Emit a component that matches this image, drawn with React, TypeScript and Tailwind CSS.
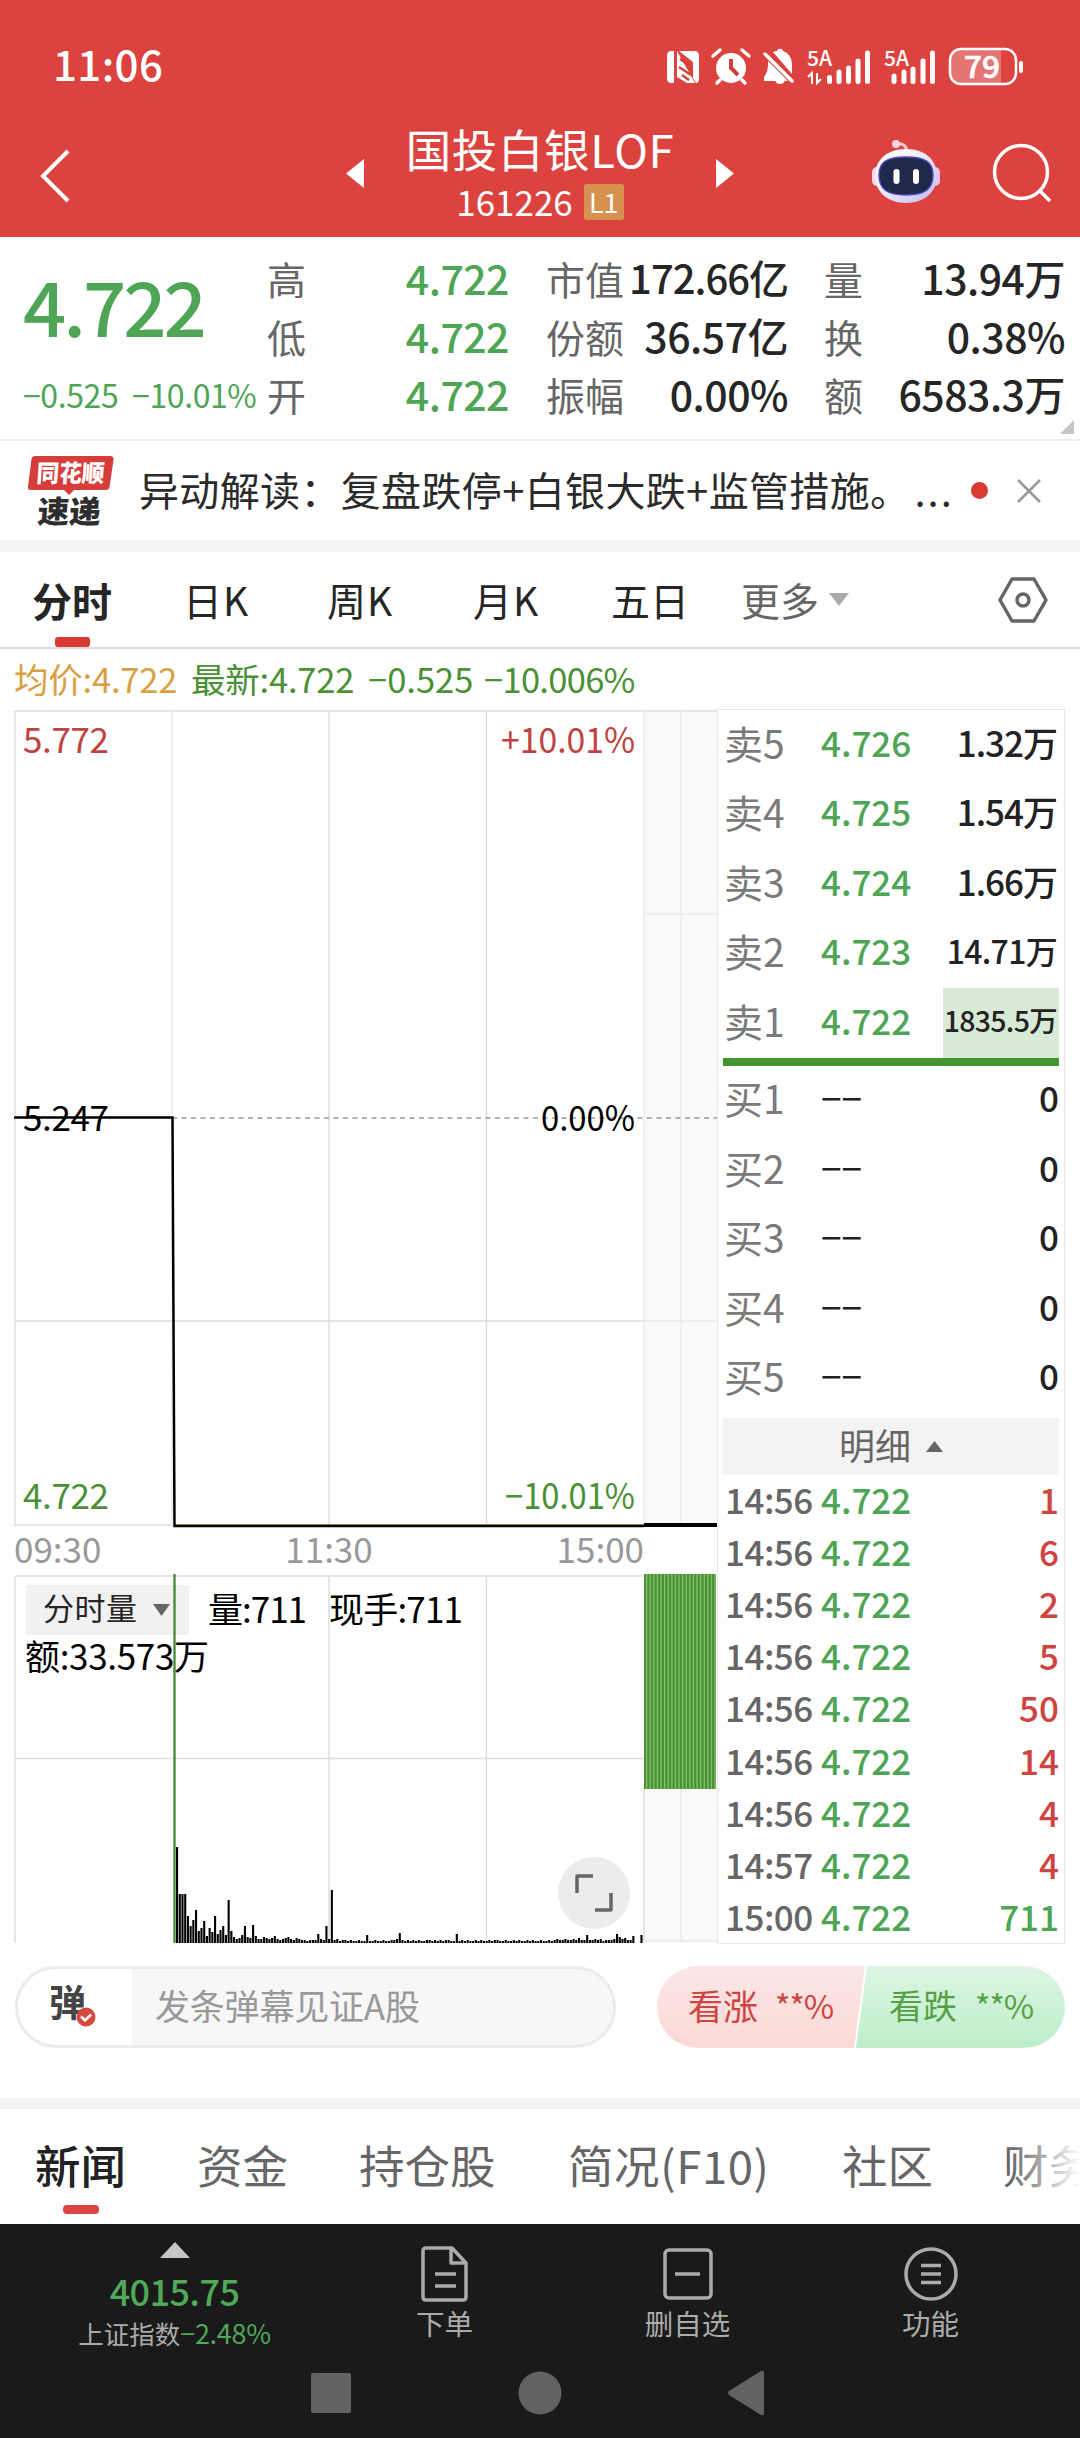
import type { ReactNode } from 'react';
import clsx from 'clsx';

const stats = [
  [
    { label: '高', value: '4.722' },
    { label: '低', value: '4.722' },
    { label: '开', value: '4.722' },
  ],
  [
    { label: '市值', value: '172.66亿' },
    { label: '份额', value: '36.57亿' },
    { label: '振幅', value: '0.00%' },
  ],
  [
    { label: '量', value: '13.94万' },
    { label: '换', value: '0.38%' },
    { label: '额', value: '6583.3万' },
  ],
];

const asks = [
  { label: '卖5', price: '4.726', volume: '1.32万' },
  { label: '卖4', price: '4.725', volume: '1.54万' },
  { label: '卖3', price: '4.724', volume: '1.66万' },
  { label: '卖2', price: '4.723', volume: '14.71万' },
  { label: '卖1', price: '4.722', volume: '1835.5万' },
];

const bids = ['买1', '买2', '买3', '买4', '买5'];

const trades = [
  { time: '14:56', volume: '1' },
  { time: '14:56', volume: '6' },
  { time: '14:56', volume: '2' },
  { time: '14:56', volume: '5' },
  { time: '14:56', volume: '50' },
  { time: '14:56', volume: '14' },
  { time: '14:56', volume: '4' },
  { time: '14:57', volume: '4' },
  { time: '15:00', volume: '711', down: true },
];

// Per-minute volume after the resumption, in chart pixels
const volumes = [
  96, 49, 49, 49, 27, 17, 23, 33, 12, 15, 22, 7, 15, 11, 27, 9, 13, 17, 8, 43, 12, 6, 4, 5, 8, 17, 6, 5, 18, 7,
  4, 4, 6, 5, 4, 5, 7, 4, 3, 4, 5, 6, 4, 3, 5, 4, 3, 3, 2, 3, 3, 3, 9, 4, 3, 17, 4, 53, 3, 4,
  2, 3, 3, 2, 3, 2, 2, 3, 2, 2, 8, 2, 2, 3, 2, 2, 3, 2, 2, 3, 3, 4, 10, 3, 2, 3, 2, 3, 2, 3,
  2, 2, 3, 3, 2, 3, 2, 3, 2, 3, 3, 2, 2, 9, 2, 3, 2, 3, 2, 2, 3, 2, 3, 2, 2, 3, 2, 3, 3, 2,
  2, 3, 2, 2, 3, 2, 3, 2, 2, 3, 2, 3, 2, 2, 3, 2, 2, 3, 2, 3, 4, 3, 3, 4, 3, 3, 4, 3, 5, 3,
  3, 8, 3, 3, 4, 3, 4, 2, 3, 3, 3, 4, 9, 6, 4, 5, 3, 3, 7, 0, 0, 8,
];

function StatusIcons() {
  return (
    <svg width="370" height="50" viewBox="660 40 370 50" fill="#fff">
      <path d="M671 51h3v32h-3q-4 0-4-5V56q0-5 4-5z" />
      <path d="M677 51l18 32h-8l-10-6zM679 51h15q5 0 5 5v22q0 5-3 5l-3-5V62z" />
      <path d="M680 59l9 6M679 67l12 8M682 75l7 5" stroke="#d43f3b" strokeWidth="2.200" />
      <circle cx="731" cy="68" r="15" />
      <path d="M713 56l7-6M749 56l-7-6M720 80l-3 3M742 80l3 3" stroke="#fff" strokeWidth="3.500" strokeLinecap="round" />
      <path d="M731 59v9l7 7" fill="none" stroke="#d43f3b" strokeWidth="4" />
      <path d="M764 77q4-5 4-13v-3l20 20h-24zM773 52q2-1 4-1 1-3 3-2 2-1 3 2 9 3 9 14v9zM775 80h10q-1 4-5 4t-5-4z" />
      <path d="M765 54l27 27" stroke="#fff" strokeWidth="3.500" strokeLinecap="round" />
      <g fontSize="21" fontWeight="500" fontFamily="'Noto Sans CJK SC', sans-serif">
        <text x="807" y="66" textLength="25" lengthAdjust="spacingAndGlyphs">5A</text>
        <text x="884" y="66" textLength="25" lengthAdjust="spacingAndGlyphs">5A</text>
      </g>
      <path d="M808 77l4-4v11M817 73v10l4-4" fill="none" stroke="#fff" strokeWidth="2" />
      <g stroke="#fff" strokeWidth="5" strokeLinecap="round">
        <path d="M829.500 77.500v4M839 72v9.500M848.500 68v13.500M858 61v20.500M867.500 53v28.500" />
        <path d="M894 76v5.500M904 72v9.500M913 69v12.500M923 61v20.500M932.500 53v28.500" />
      </g>
      <path d="M962 50h39v33h-39q-11 0-11-11V61q0-11 11-11z" fillOpacity=".27" />
      <rect x="950" y="49" width="66" height="35" rx="11" fill="none" stroke="#fff" strokeWidth="2.500" />
      <rect x="1019" y="61" width="4" height="12" rx="2" />
      <text x="964" y="77.500" fontSize="30" fontWeight="500" textLength="36" lengthAdjust="spacingAndGlyphs" stroke="#fff" strokeWidth=".6" fontFamily="'Noto Sans CJK SC', sans-serif">79</text>
    </svg>
  );
}

function RobotIcon() {
  return (
    <svg width="70" height="66" viewBox="0 0 70 66">
      <defs>
        <linearGradient id="shell" x1="0" y1="0" x2="1" y2="1">
          <stop offset="0" stopColor="#fff" />
          <stop offset=".5" stopColor="#e8e9fd" />
          <stop offset="1" stopColor="#c3b4f2" />
        </linearGradient>
      </defs>
      <path d="M25 5q10-2 11 8" fill="none" stroke="#fbc9d3" strokeWidth="3" />
      <circle cx="25" cy="5" r="4" fill="#fbd5dc" />
      <rect x="1" y="28" width="10" height="19" rx="5" fill="#f6d8e8" />
      <rect x="59" y="28" width="10" height="19" rx="5" fill="#e3c4ee" />
      <path d="M35 10c19 0 31 11 31 27S53 64 35 64 4 53 4 37s12-27 31-27z" fill="url(#shell)" />
      <path d="M35 18c19 0 27 5 27 18 0 14-8 20-27 20S8 50 8 36c0-13 8-18 27-18z" fill="#20284b" stroke="#5547b5" strokeWidth="1.500" />
      <rect x="22.500" y="30" width="6" height="15" rx="3" fill="#fff" />
      <rect x="42" y="30" width="6" height="15" rx="3" fill="#fff" />
    </svg>
  );
}

function Header() {
  return (
    <header className="h-[237px] bg-[#dc433f] text-white">
      <div className="flex h-[120px] items-center justify-between pt-[10px] pr-[50px] pl-[53px]">
        <span className="relative -top-[3px] text-[42px] font-medium tracking-[0.4px]">11:06</span>
        <div className="relative">
          <StatusIcons />
        </div>
      </div>
      <div className="flex h-[117px]">
        <svg className="mt-[28px] ml-[38px]" width="34" height="56" fill="none" stroke="#fff" strokeWidth="4">
          <path d="M30 3L5 28l25 25" />
        </svg>
        <svg className="mt-[39px] ml-[274px]" width="18" height="29" fill="#fff">
          <path d="M18 0v29L0 14.500z" />
        </svg>
        <div className="flex w-[352px] flex-col items-center">
          <h1 className="mt-[1px] h-[60px] text-[45.500px] leading-[54px] tracking-[0.6px]">国投白银LOF</h1>
          <div className="flex h-[44px] items-center gap-[11px]">
            <span className="relative -top-[2px] text-[35px] leading-[40px]">161226</span>
            <span className="relative -top-[1px] flex h-[36px] w-[40px] items-center justify-center rounded-[3px] bg-[#d6914f] pb-[2px] text-[27px] leading-none">
              L1
            </span>
          </div>
        </div>
        <svg className="mt-[39px]" width="18" height="29" fill="#fff">
          <path d="M0 0v29l18-14.500z" />
        </svg>
        <div className="mt-[19px] ml-[137px]">
          <RobotIcon />
        </div>
        <svg className="mt-[22px] ml-[49px]" width="62" height="62" fill="none" stroke="#fff" strokeWidth="3.500">
          <circle cx="31" cy="30" r="26.500" />
          <path d="M49 48l11 11" />
        </svg>
      </div>
    </header>
  );
}

interface StatColumnProps {
  rows: { label: string; value: string }[];
  className: string;
  valueClass: string;
}

function StatColumn({ rows, className, valueClass }: StatColumnProps) {
  return (
    <div className={clsx('flex flex-col', className)}>
      {rows.map((row) => (
        <div key={row.label} className="flex h-[58px] items-center justify-between whitespace-nowrap leading-[58px]">
          <span className="text-[39px] text-[#666]">{row.label}</span>
          <span className={clsx('relative -top-[1px] font-medium', row.value === '172.66亿' ? 'text-[40px] tracking-[-1px]' : 'text-[41px] tracking-[-0.5px]', valueClass)}>
            {row.value}
          </span>
        </div>
      ))}
    </div>
  );
}

function Quote() {
  return (
    <section className="relative flex h-[204px] border-b-2 border-[#eee] pt-[12px]">
      <div className="w-[267px] pl-[23px] whitespace-nowrap text-[#4ea555]">
        <div className="h-[116px] text-[76px] leading-[111px] font-medium tracking-[-3px]">4.722</div>
        <div className="text-[32px] leading-[58px] tracking-[-0.4px] [word-spacing:7px]">−0.525 −10.01%</div>
      </div>
      <StatColumn rows={stats[0]} className="w-[242px]" valueClass="text-[#4ea555]" />
      <StatColumn rows={stats[1]} className="ml-[37px] w-[242px]" valueClass="text-[#262626]" />
      <StatColumn rows={stats[2]} className="ml-[36px] w-[241px]" valueClass="text-[#262626]" />
      <svg className="absolute right-[6px] bottom-[5px]" width="14" height="14" fill="#c6c6c6">
        <path d="M14 0v14H0z" />
      </svg>
    </section>
  );
}

function NewsBar() {
  return (
    <section className="flex h-[99px] items-center">
      <svg className="ml-[26px]" width="90" height="92" viewBox="0 -8 90 92" fontFamily="'Noto Sans CJK SC', sans-serif" fontWeight="900">
        <path d="M9 3h75q4 0 3.500 4l-4 27q-.5 3-4 3H48l-5 5-5-5H5q-3.500 0-3-3l3.500-28q.5-3 3.500-3z" fill="#d63d3a" />
        <text transform="translate(10 29) skewX(-4)" fontSize="24" fill="#fff" textLength="68" lengthAdjust="spacingAndGlyphs">同花顺</text>
        <text transform="translate(11 70) skewX(-4)" fontSize="31" fill="#2e2e2e" textLength="63" lengthAdjust="spacingAndGlyphs">速递</text>
      </svg>
      <p className="relative -top-[2px] ml-[23px] w-[818px] whitespace-nowrap text-[40px] leading-[60px] tracking-[0.35px] text-[#2b2b2b]">
        异动解读：复盘跌停+白银大跌+监管措施。<span className="ml-[4px] tracking-[2px]">...</span>
      </p>
      <span className="ml-[14px] h-[17px] w-[17px] rounded-full bg-[#d63a30]" />
      <svg className="ml-[29px]" width="24" height="24" stroke="#999" strokeWidth="2.500">
        <path d="M1 1l22 22M23 1L1 23" />
      </svg>
    </section>
  );
}

function ChartTabs() {
  return (
    <nav className="flex h-[97px] items-center border-b-2 border-[#dcdcdc] text-[39px] whitespace-nowrap text-[#262626]">
      <div className="relative ml-[32px] w-[151px]">
        <span className="text-[40px] font-bold">分时</span>
        <span className="absolute -bottom-[17px] left-[23px] h-[10px] w-[35px] rounded-[3px] bg-[#d63a30]" />
      </div>
      <span className="w-[144px] tracking-[1px]">日K</span>
      <span className="w-[146px] tracking-[1px]">周K</span>
      <span className="w-[138px] tracking-[1px]">月K</span>
      <span className="w-[130px]">五日</span>
      <span className="w-[88px] text-[#666]">更多</span>
      <svg width="20" height="13" fill="#aaa">
        <path d="M0 0h20L10 13z" />
      </svg>
      <svg className="ml-[149px]" width="50" height="46" fill="none" stroke="#666" strokeWidth="3.500">
        <path d="M14 2h22l12 21-12 21H14L2 23z" strokeLinejoin="round" />
        <circle cx="25" cy="23" r="6" />
      </svg>
    </nav>
  );
}

function PriceChart() {
  return (
    <svg width="703" height="865" viewBox="14 709 703 865" fontFamily="'Noto Sans CJK SC', sans-serif" fontSize="35">
      <rect x="644" y="711" width="73" height="815" fill="#f9f9f9" />
      <g stroke="#dedede" strokeWidth="1.500" fill="none">
        <path d="M15 711H717M15 711V1526M329 711V1526M486.500 711V1526M15 1321H644M15 1525H644" />
        <path d="M172 711V1526M681 711V1526M644 711V1526M644 914H717M644 1321H717" stroke="#ebebeb" />
      </g>
      <path d="M172 1118H717" stroke="#999" strokeWidth="1.500" strokeDasharray="5 4.500" />
      <path d="M174 1525H644" stroke="#d9a84a" strokeWidth="2" />
      <path d="M14 1117.500H172.500L174.500 1526H644" fill="none" stroke="#000" strokeWidth="2.500" />
      <path d="M644 1525H717" stroke="#000" strokeWidth="4" />
      <g lengthAdjust="spacingAndGlyphs">
        <text x="23" y="753" fill="#bf4340" textLength="86">5.772</text>
        <text x="501" y="753" fill="#bf4340" textLength="134" lengthAdjust="spacingAndGlyphs">+10.01%</text>
        <text x="23" y="1131" textLength="86">5.247</text>
        <text x="541" y="1131" textLength="94" lengthAdjust="spacingAndGlyphs">0.00%</text>
        <text x="23" y="1509" fill="#4a9035" textLength="86">4.722</text>
        <text x="505" y="1509" fill="#4a9035" textLength="130" lengthAdjust="spacingAndGlyphs">−10.01%</text>
      </g>
      <g fill="#999">
        <text x="14" y="1563">09:30</text>
        <text x="329" y="1563" textAnchor="middle">11:30</text>
        <text x="644" y="1563" textAnchor="end">15:00</text>
      </g>
    </svg>
  );
}

function VolumeChart() {
  return (
    <div className="relative h-[370px]">
      <svg width="703" height="370" viewBox="14 1574 703 370" fontFamily="'Noto Sans CJK SC', sans-serif" fontSize="35">
        <rect x="644" y="1788" width="73" height="155" fill="#f9f9f9" />
        <rect x="26" y="1585" width="163" height="50" rx="3" fill="#f1f1f1" />
        <g stroke="#dedede" strokeWidth="1.500">
          <path d="M15 1576H644M15 1576V1943M329 1576V1943M486.500 1576V1943M644 1788V1943M15 1758.500H644" />
          <path d="M681 1788V1943M644 1941H717" stroke="#ebebeb" />
        </g>
        {volumes.map((h, i) => (
          <rect key={i} x={176 + i * 2.716} y={1943 - h} width="2.100" height={h} />
        ))}
        <path d="M174.500 1574V1943" stroke="#46872f" strokeWidth="2.300" />
        <rect x="644" y="1574" width="72" height="215" fill="#4a9035" />
        {Array.from({ length: 20 }, (_, i) => (
          <rect key={i} x={646 + i * 3.6} y="1574" width="1.300" height="215" fill="#7fc46c" />
        ))}
        <text x="43" y="1620" fontSize="31" fill="#262626" textLength="94">分时量</text>
        <path d="M153 1604h17l-8.500 12z" fill="#666" />
        <text x="208" y="1623" textLength="99">量:711</text>
        <text x="329" y="1623" textLength="134">现手:711</text>
        <text x="25" y="1670" textLength="184">额:33.573万</text>
      </svg>
      <span className="absolute right-[87px] bottom-[15px] flex h-[72px] w-[72px] items-center justify-center rounded-full bg-[#ececec]">
        <svg width="38" height="38" fill="none" stroke="#666" strokeWidth="3.500" strokeLinejoin="round">
          <path d="M2 19V2h16M36 19v17H20" />
        </svg>
      </span>
    </div>
  );
}

function OrderBook() {
  return (
    <aside className="h-[1235px] w-[348px] border border-[#e8e8e8] px-[5px] text-[35px] whitespace-nowrap">
      {asks.map((row, i) => (
        <div key={row.label} className="flex h-[69.500px] items-center leading-[60px]">
          <span className="relative -top-[3px] w-[98px] pl-[1px] text-[39px] text-[#7a7a7a]">{row.label}</span>
          <span className="relative -top-[3px] font-medium">
            <span className="text-[#4ea555]">{row.price}</span>
          </span>
          <span
            className={clsx(
              'ml-auto flex h-full w-[116px] items-center justify-end pr-[2px] pb-[6px] font-medium text-[#222]',
              i < 3 && 'tracking-[-1px]',
              i === 3 && 'text-[32px] tracking-[-0.7px]',
              i === 4 && 'bg-[#d8ead6] text-[28.500px] tracking-[-0.7px]',
            )}
          >
            {row.volume}
          </span>
        </div>
      ))}
      <div className="h-[8px] bg-[#43962f]" />
      {bids.map((label) => (
        <div key={label} className="flex h-[69.500px] items-center leading-[60px] text-[#222]">
          <span className="relative -top-[3px] w-[98px] pl-[1px] text-[39px] text-[#7a7a7a]">{label}</span>
          <span className="relative -top-[3px] text-[37px]">−−</span>
          <span className="relative -top-[3px] ml-auto font-medium">0</span>
        </div>
      ))}
      <div className="mt-[5px] flex h-[57px] items-center justify-center bg-[#f3f3f3] text-[36px] text-[#666]">
        <span className="relative -top-[3px]">明细</span>
        <svg className="ml-[15px]" width="17" height="11" fill="#666">
          <path d="M0 11h17L8.500 0z" />
        </svg>
      </div>
      <div className="-mt-[2px]">
        {trades.map((row, i) => (
          <div key={i} className="flex h-[52.100px] items-center leading-[50px]">
            <span className="w-[98px] pl-[2px] font-medium tracking-[-0.5px] text-[#666]">{row.time}</span>
            <span className="font-medium text-[#4ea555]">4.722</span>
            <span className={clsx('ml-auto font-medium', row.down ? 'text-[#4ea555]' : 'text-[#cf4340]')}>{row.volume}</span>
          </div>
        ))}
      </div>
    </aside>
  );
}

function Danmaku() {
  return (
    <section className="flex h-[154px] pt-[22px] pl-[15px] text-[35px] leading-[50px] whitespace-nowrap">
      <div className="flex h-[82px] w-[601px] overflow-hidden rounded-full border-[3px] border-[#ececec] bg-[#f7f7f7]">
        <div className="relative flex w-[114px] items-center bg-white pl-[31px]">
          <span className="relative -top-[6px] text-[37px] font-bold text-[#444]">弹</span>
          <svg className="absolute top-[38px] left-[58px]" width="20" height="20">
            <circle cx="10" cy="10" r="9.500" fill="#d6493f" />
            <path d="M5 9.500l4 4 6-6" fill="none" stroke="#fff" strokeWidth="2.500" />
          </svg>
        </div>
        <span className="relative -top-[2px] flex items-center pl-[23px] tracking-[-0.2px] text-[#999]">发条弹幕见证A股</span>
      </div>
      <div className="relative ml-[41px] h-[82px] w-[408px]">
        <svg className="absolute inset-0" width="408" height="82">
          <defs>
            <linearGradient id="up" x2="0" y2="1">
              <stop offset="0" stopColor="#fbe7e6" />
              <stop offset="1" stopColor="#fad9d6" />
            </linearGradient>
            <linearGradient id="down" x2="0" y2="1">
              <stop offset="0" stopColor="#dcf6e3" />
              <stop offset="1" stopColor="#bdedca" />
            </linearGradient>
          </defs>
          <path d="M41 0h167l-11 82H41a41 41 0 0 1 0-82z" fill="url(#up)" />
          <path d="M210 0h157a41 41 0 0 1 0 82H199z" fill="url(#down)" />
        </svg>
        <div className="relative -top-[2px] flex h-full items-center pl-[31px]">
          <span className="w-[87px] text-[#cf4340]">看涨</span>
          <span className="w-[114px] text-[33px] tracking-[-1px] text-[#cf4340]">**%</span>
          <span className="w-[86px] text-[34px] text-[#58a046]">看跌</span>
          <span className="text-[33px] tracking-[-1px] text-[#58a046]">**%</span>
        </div>
      </div>
    </section>
  );
}

function InfoTabs() {
  return (
    <nav className="relative flex h-[115px] overflow-hidden text-[45.500px] leading-[111px] whitespace-nowrap text-[#666]">
      <span className="ml-[35px] w-[162px] shrink-0 font-medium text-[#222]">新闻</span>
      <span className="w-[162px] shrink-0">资金</span>
      <span className="w-[209px] shrink-0">持仓股</span>
      <span className="w-[274px] shrink-0 tracking-[0.6px]">简况(F10)</span>
      <span className="w-[161px] shrink-0">社区</span>
      <span className="shrink-0">财务</span>
      <span className="absolute top-0 right-0 h-full w-[70px] bg-gradient-to-r from-transparent to-white" />
      <span className="absolute bottom-[10px] left-[63px] h-[9px] w-[36px] rounded-[4px] bg-[#dc4444]" />
    </nav>
  );
}

function BarItem({ label, children }: { label: string; children: ReactNode }) {
  return (
    <div className="flex w-[243px] flex-col items-center pt-[21px]">
      {children}
      <span className="text-[28.500px] leading-[40px] text-[#ababab]">{label}</span>
    </div>
  );
}

function BottomBar() {
  return (
    <footer className="h-[214px] bg-[#1a1a1a]">
      <div className="flex h-[136px]">
        <div className="flex w-[323px] flex-col items-center pt-[18px] pl-[26px] whitespace-nowrap">
          <svg width="30" height="16" fill="#c6c6c6">
            <path d="M0 16h30L15 0z" />
          </svg>
          <span className="mt-[7px] text-[36px] leading-[50px] font-medium tracking-[-0.6px] text-[#4fa958]">4015.75</span>
          <span className="mt-[1px] text-[25.500px] leading-[34px] text-[#ababab]">
            上证指数<span className="text-[27px] tracking-[-0.3px] text-[#4fa958]">−2.48%</span>
          </span>
        </div>
        <BarItem label="下单">
          <svg width="50" height="58" fill="none" stroke="#ababab" strokeWidth="3.500" strokeLinejoin="round">
            <path d="M6 3h26l14 15v34q0 3-3 3H6q-3 0-3-3V6q0-3 3-3zM31 3v15h15M15 29h21M15 41h21" />
          </svg>
        </BarItem>
        <BarItem label="删自选">
          <svg width="50" height="58" fill="none" stroke="#ababab" strokeWidth="3.500">
            <rect x="2" y="5" width="46" height="48" rx="4" />
            <path d="M12 29h25" />
          </svg>
        </BarItem>
        <BarItem label="功能">
          <svg width="54" height="58" fill="none" stroke="#ababab" strokeWidth="3.500">
            <circle cx="27" cy="29" r="25" />
            <path d="M17 20.500h20M17 29h20M17 37.500h20" />
          </svg>
        </BarItem>
      </div>
      <div className="flex h-[66px] items-center fill-[#626262] pl-[311px]">
        <svg width="40" height="40">
          <rect width="40" height="40" rx="2" />
        </svg>
        <svg className="ml-[167px]" width="44" height="44">
          <circle cx="22" cy="22" r="21.500" />
        </svg>
        <svg className="ml-[165px]" width="38" height="46">
          <path d="M34 1q3-1 3 2v40q0 3-3 2L2 25q-2-2 0-4z" />
        </svg>
      </div>
    </footer>
  );
}

export default function App() {
  return (
    <div className="h-[2438px] w-[1080px] overflow-hidden bg-white font-['Noto_Sans_CJK_SC',sans-serif]">
      <Header />
      <Quote />
      <NewsBar />
      <div className="h-[12px] bg-[#f4f4f4]" />
      <ChartTabs />
      <div className="flex h-[60px] items-center pb-[3px] pl-[14px] text-[34.500px] leading-[56px] whitespace-nowrap text-[#4a9035]">
        <span className="w-[177px] tracking-[-0.2px] text-[#d9a040]">均价:4.722</span>
        <span className="w-[177px] tracking-[-0.2px]">最新:4.722</span>
        <span className="w-[116px]">−0.525</span>
        <span className="tracking-[-0.7px]">−10.006%</span>
      </div>
      <main className="flex h-[1235px] pl-[14px]">
        <div className="w-[703px]">
          <PriceChart />
          <VolumeChart />
        </div>
        <OrderBook />
      </main>
      <Danmaku />
      <div className="h-[11px] bg-[#f3f3f3]" />
      <InfoTabs />
      <BottomBar />
    </div>
  );
}
